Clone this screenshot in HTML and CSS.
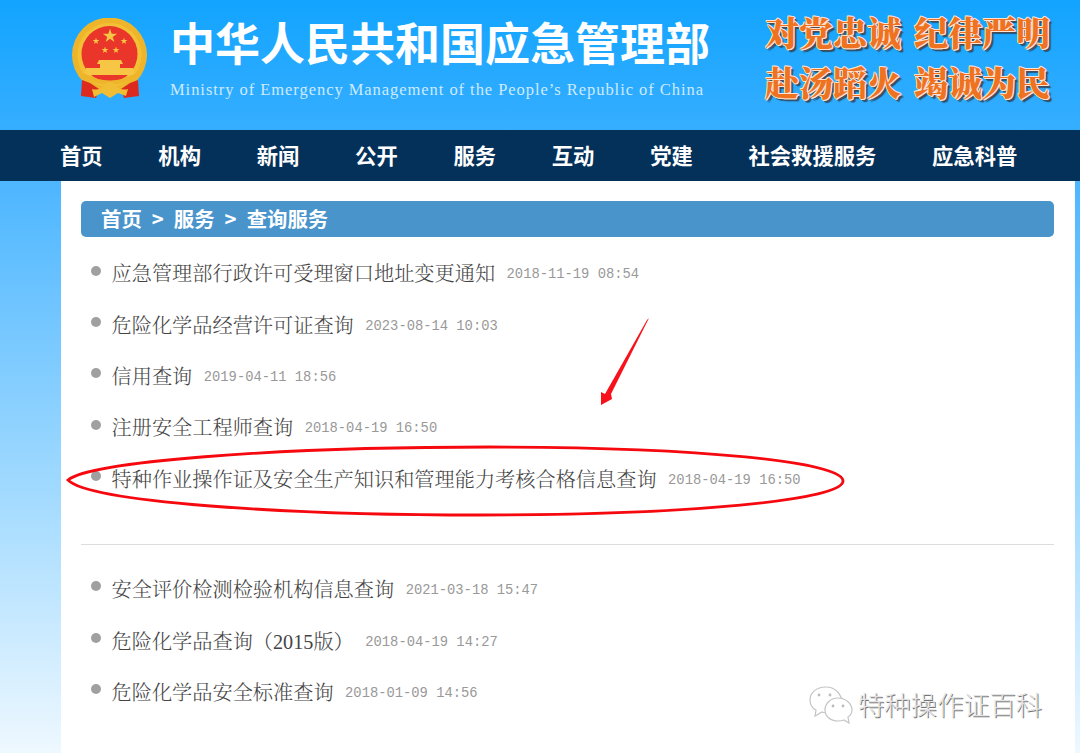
FILE: index.html
```html
<!DOCTYPE html>
<html lang="zh-CN">
<head>
<meta charset="utf-8">
<title>查询服务</title>
<link rel="stylesheet" href="styles.css">
</head>
<body>
<div class="page">
  <header class="masthead">
    <svg class="emblem" viewBox="0 0 76 80" width="76" height="80" aria-hidden="true">
      <defs>
        <polygon id="star" points="0,-1 .225,-.309 .951,-.309 .363,.118 .588,.809 0,.382 -.588,.809 -.363,.118 -.951,-.309 -.225,-.309"/>
      </defs>
      <circle cx="37.5" cy="37" r="37.5" fill="#eeb52b"/>
      <circle cx="37.5" cy="37" r="32" fill="#f5c93e" opacity=".6"/>
      <circle cx="37.5" cy="36" r="28" fill="#e9352a"/>
      <g fill="#f6c644">
        <use href="#star" transform="translate(38 18) scale(7.5)"/>
        <use href="#star" transform="translate(24 23) scale(3.6)"/>
        <use href="#star" transform="translate(52 23) scale(3.6)"/>
        <use href="#star" transform="translate(33 32) scale(3.6)"/>
        <use href="#star" transform="translate(44 32) scale(3.6)"/>
        <path d="M27 42 H49 L51 46 H48 V50 H61 L63 57 H12 L14 50 H28 V46 H25Z"/>
      </g>
      <path d="M10 58 Q38 76 66 58 L64 55 Q38 70 12 55Z" fill="#eeb52b"/>
      <path d="M10 62 L18 65 L27 71 L24 80 L9 78Z" fill="#dd2a1e"/>
      <path d="M66 62 L58 65 L49 71 L52 80 L67 78Z" fill="#dd2a1e"/>
      <path d="M20 71 Q28 73 32 67 Q38 61 44 67 Q48 73 56 71 L54 78 L46 75 L38 80 L30 75 L22 79Z" fill="#f0bd35"/>
    </svg>
    <div class="brand">
      <h1 class="brand-name">中华人民共和国应急管理部</h1>
      <p class="brand-sub">Ministry of Emergency Management of the People’s Republic of China</p>
    </div>
    <div class="slogans">
      <p class="slogan"><span>对党忠诚</span><span>纪律严明</span></p>
      <p class="slogan"><span>赴汤蹈火</span><span>竭诚为民</span></p>
    </div>
  </header>

  <nav class="nav">
    <a>首页</a><a>机构</a><a>新闻</a><a>公开</a><a>服务</a><a>互动</a><a>党建</a><a>社会救援服务</a><a>应急科普</a>
  </nav>

  <main class="content">
    <div class="crumbs"><span>首页</span><span>&gt;</span><span>服务</span><span>&gt;</span><span>查询服务</span></div>
    <ul class="list first">
      <li><span class="name">应急管理部行政许可受理窗口地址变更通知</span><time>2018-11-19 08:54</time></li>
      <li><span class="name">危险化学品经营许可证查询</span><time>2023-08-14 10:03</time></li>
      <li><span class="name">信用查询</span><time>2019-04-11 18:56</time></li>
      <li><span class="name">注册安全工程师查询</span><time>2018-04-19 16:50</time></li>
      <li><span class="name">特种作业操作证及安全生产知识和管理能力考核合格信息查询</span><time>2018-04-19 16:50</time></li>
    </ul>
    <hr class="rule">
    <ul class="list">
      <li><span class="name">安全评价检测检验机构信息查询</span><time>2021-03-18 15:47</time></li>
      <li><span class="name">危险化学品查询（<span class="digits">2015</span>版）</span><time>2018-04-19 14:27</time></li>
      <li><span class="name">危险化学品安全标准查询</span><time>2018-01-09 14:56</time></li>
    </ul>
  </main>

  <svg class="markup" viewBox="0 0 1080 753" width="1080" height="753" aria-hidden="true">
    <path class="ring" d="M68 480 C90 462 270 447 490 447 C700 447 843 462 843 481 C843 500 690 515 480 515 C280 515 90 502 68 480Z"/>
    <polygon class="arrow" points="649,318 611,394 612,399 601,405 601,392 605,394 647,320"/>
    <g class="wechat">
      <path d="M826 687 C816 687 810 693 810 700 C810 704 812 708 816 710 L815 716 L822 712 C824 713 826 713 829 713 C835 713 840 710 843 705 C842 695 836 687 826 687Z"/>
      <path d="M838 698 C830 698 825 704 825 710 C825 716 830 721 838 721 C840 721 842 721 844 720 L849 723 L848 717 C851 715 852 713 852 710 C852 704 846 698 838 698Z"/>
    </g>
    <g class="wechat-dots">
      <circle cx="819" cy="695" r="1.4"/><circle cx="830" cy="695" r="1.4"/>
      <circle cx="833" cy="706" r="1.4"/><circle cx="843" cy="706" r="1.4"/>
    </g>
  </svg>
  <div class="watermark">特种操作证百科</div>
</div>
</body>
</html>
```
FILE: styles.css
```css
* { box-sizing: border-box; }
html, body { margin: 0; padding: 0; height: 100%; overflow: hidden; }
body {
  font-family: "Noto Sans CJK SC", "Noto Sans", sans-serif;
  background: linear-gradient(180deg, #12a4ff 0, #36aeff 130px, #4db6ff 181px, #a4dbff 500px, #eef8ff 753px);
}
.page { position: relative; display: flex; flex-direction: column; height: 753px; width: 1080px; }

.masthead { display: flex; height: 130px; flex: none; padding: 18px 0 0 72px; }
.emblem { flex: none; }
.brand { margin-left: 22px; width: 562px; }
.brand-name {
  margin: -6px 0 0;
  font-size: 45px;
  line-height: 60px;
  font-weight: 700;
  color: #fff;
  white-space: nowrap;
}
.brand-sub {
  margin: 9px 0 0;
  font-family: "Liberation Serif", serif;
  font-size: 16.5px;
  line-height: 18px;
  letter-spacing: .95px;
  color: #cdeaff;
  white-space: nowrap;
}
.slogans { margin: -11px 0 0 33px; }
.slogan {
  display: flex;
  gap: 13px;
  margin: 0 0 1px;
  font-family: "Noto Serif CJK SC", "Noto Sans CJK SC", serif;
  font-size: 34px;
  line-height: 49px;
  font-weight: 900;
  color: #ef7221;
  white-space: nowrap;
  text-shadow: 1px 0 #fbe3d6, -1px 0 #fbe3d6, 0 1px #fbe3d6, 0 -1px #fbe3d6, 1px 1px #fbe3d6, -1px -1px #fbe3d6, 2px 2px 0 #4b4b55, 3px 3px 1px #23506f;
}

.nav {
  display: flex;
  flex: none;
  gap: 55.75px;
  height: 51px;
  padding: 0 0 2px 60px;
  background: #04315a;
  align-items: center;
  font-size: 21.3px;
  font-weight: 700;
  color: #fff;
  white-space: nowrap;
}

.content {
  flex: 1;
  margin: 0 5px 0 61px;
  padding: 20px 21px 0 20px;
  background: #fff;
}
.crumbs {
  display: flex;
  gap: 10px;
  align-items: center;
  height: 36px;
  padding: 0 0 2px 20px;
  border-radius: 5px;
  background: #4a94cc;
  color: #fff;
  font-size: 20.4px;
  font-weight: 700;
}
.list { list-style: none; margin: 0; padding: 0; }
.list.first { margin-top: 10px; }
.list li {
  position: relative;
  display: flex;
  align-items: center;
  height: 51.4px;
  padding-left: 30.5px;
  white-space: nowrap;
}
.list li::before {
  content: "";
  position: absolute;
  left: 10px;
  top: 18.5px;
  width: 10px;
  height: 10px;
  border-radius: 50%;
  background: #a0a0a0;
}
.name { font-family: "Noto Serif CJK SC", "Noto Sans CJK SC", serif; font-size: 20.2px; font-weight: 300; color: #444; }
.digits { font-family: "Liberation Serif", serif; font-size: 20.2px; }
time {
  margin-left: 11.5px;
  padding-top: 4px;
  font-family: "Liberation Mono", monospace;
  font-size: 13.8px;
  color: #999;
}
.rule { height: 1px; margin: 40px 0 18px; border: 0; background: #ddd; }

.markup { position: absolute; left: 0; top: 0; pointer-events: none; }
.ring { fill: none; stroke: #f5090f; stroke-width: 2.8; }
.arrow { fill: #f8101a; }
.wechat { fill: #fff; stroke: #c4c4c4; stroke-width: 1.2; }
.wechat-dots { fill: #bbb; }
.watermark {
  position: absolute;
  left: 858px;
  top: 686px;
  font-size: 26.3px;
  line-height: 36px;
  font-weight: 300;
  color: #e4e4e4;
  text-shadow: 1px 1px 0 #777;
  white-space: nowrap;
}
```
